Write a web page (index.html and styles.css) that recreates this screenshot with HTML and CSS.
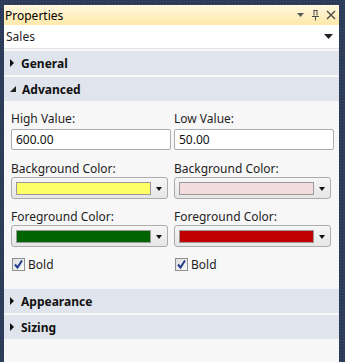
FILE: index.html
```html
<!DOCTYPE html>
<html lang="en">
<head>
    <meta charset="UTF-8">
    <title>Properties</title>
    <link rel="stylesheet" href="styles.css">
</head>
<body>
    <div class="panel">
        <div class="titlebar">
            <span class="title">Properties</span>
            <div class="title-tools">
                <svg width="9" height="6" viewBox="0 0 9 6"><path d="M1 1h7L4.5 5z" fill="#5a5a5a"/></svg>
                <svg width="9" height="12" viewBox="0 0 9 12"><path d="M2.5 1.5h4M3 1.5v5M6 1.5v5M1 7.5h7M4.5 7.5v4" stroke="#4a4a4a" stroke-width="1" fill="none"/></svg>
                <svg width="10" height="10" viewBox="0 0 10 10"><path d="M1 1l8 8M9 1l-8 8" stroke="#4a4a4a" stroke-width="1.4"/></svg>
            </div>
        </div>
        <div class="object-select">
            <span>Sales</span>
            <svg width="9" height="5" viewBox="0 0 9 5"><path d="M0 0h9L4.5 5z" fill="#222"/></svg>
        </div>

        <div class="section-header">
            <span class="arrow-right"></span>General
        </div>
        <div class="section-header">
            <span class="arrow-open"></span>Advanced
        </div>
        <div class="section-body">
            <div class="field">
                <label>High Value:</label>
                <input class="text-input" type="text" value="600.00">
            </div>
            <div class="field">
                <label>Low Value:</label>
                <input class="text-input" type="text" value="50.00">
            </div>

            <div class="field">
                <label>Background Color:</label>
                <div class="color-pick">
                    <span class="swatch" style="background:#ffff66"></span>
                    <span class="drop"></span>
                </div>
            </div>
            <div class="field">
                <label>Background Color:</label>
                <div class="color-pick">
                    <span class="swatch" style="background:#f5dcdc"></span>
                    <span class="drop"></span>
                </div>
            </div>

            <div class="field">
                <label>Foreground Color:</label>
                <div class="color-pick">
                    <span class="swatch" style="background:#006400"></span>
                    <span class="drop"></span>
                </div>
            </div>
            <div class="field">
                <label>Foreground Color:</label>
                <div class="color-pick">
                    <span class="swatch" style="background:#c00000"></span>
                    <span class="drop"></span>
                </div>
            </div>

            <div class="check-row">
                <span class="check-box">
                    <svg width="11" height="11" viewBox="0 0 11 11"><path d="M2 5.5l2.5 3L9 1.5" stroke="#213b8f" stroke-width="2" fill="none"/></svg>
                </span>
                <span>Bold</span>
            </div>
            <div class="check-row">
                <span class="check-box">
                    <svg width="11" height="11" viewBox="0 0 11 11"><path d="M2 5.5l2.5 3L9 1.5" stroke="#213b8f" stroke-width="2" fill="none"/></svg>
                </span>
                <span>Bold</span>
            </div>
        </div>
        <div class="section-header">
            <span class="arrow-right"></span>Appearance
        </div>
        <div class="section-header">
            <span class="arrow-right"></span>Sizing
        </div>
    </div>
</body>
</html>
```
FILE: styles.css
```css
html, body {
    height: 100%;
}

body {
    margin: 0;
    padding: 5px 6px 0 4px;
    box-sizing: border-box;
    background-color: #2a3a57;
    background-image: radial-gradient(circle, #3a4d6e 0.6px, transparent 0.8px);
    background-size: 3px 3px;
    font-family: 'Noto Sans', 'Open Sans', Arial, sans-serif;
    font-size: 12px;
    color: #1e1e1e;
}

.panel {
    background-color: #f7f7f7;
    height: 100%;
    display: flex;
    flex-direction: column;
}

.titlebar {
    height: 20px;
    display: flex;
    align-items: center;
    justify-content: space-between;
    padding: 0 3px 0 1px;
    background: linear-gradient(to bottom, #fff7e0, #ffe9a9);
    color: #000;
}

.title-tools {
    display: flex;
    align-items: center;
    gap: 6px;
}

.object-select {
    height: 23px;
    display: flex;
    align-items: center;
    justify-content: space-between;
    padding: 0 6px 0 2px;
    background-color: #fff;
    border-bottom: 1px solid #e3e3e3;
}

.section-header {
    height: 24px;
    margin-top: 2px;
    display: flex;
    align-items: center;
    padding-left: 6px;
    background-color: #e0e4ec;
    font-weight: bold;
    color: #111;
}

.arrow-right {
    width: 0;
    height: 0;
    border-top: 4px solid transparent;
    border-bottom: 4px solid transparent;
    border-left: 4px solid #111;
    margin-right: 7px;
}

.arrow-open {
    width: 0;
    height: 0;
    border-bottom: 6px solid #222;
    border-left: 6px solid transparent;
    margin-right: 6px;
}

.section-body {
    display: grid;
    grid-template-columns: 1fr 1fr;
    column-gap: 3px;
    row-gap: 10px;
    padding: 10px 5px 14px 7px;
}

.field label {
    display: block;
    height: 16px;
    line-height: 16px;
}

.text-input {
    display: block;
    box-sizing: border-box;
    width: 100%;
    height: 21px;
    margin-top: 2px;
    margin-bottom: 1px;
    padding: 0 4px;
    border: 1px solid #abadb3;
    border-radius: 2px;
    background: #fff;
    font: inherit;
    color: #111;
}

.color-pick {
    box-sizing: border-box;
    height: 22px;
    width: 98%;
    display: flex;
    align-items: center;
    padding: 0 0 0 4px;
    border: 1px solid #acacac;
    border-radius: 3px;
    background: linear-gradient(to bottom, #f6f6f6, #e6e6e6);
}

.swatch {
    flex: 1;
    height: 11px;
    border: 1px solid #9a9a9a;
}

.drop {
    width: 16px;
    height: 100%;
    position: relative;
}

.drop::after {
    content: "";
    position: absolute;
    left: 5px;
    top: 9px;
    border-top: 4px solid #111;
    border-left: 3px solid transparent;
    border-right: 3px solid transparent;
}

.check-row {
    display: flex;
    align-items: center;
    gap: 3px;
    padding-left: 1px;
    margin-top: -1px;
}

.check-box {
    box-sizing: border-box;
    width: 13px;
    height: 13px;
    border: 1px solid #8e8f8f;
    background: linear-gradient(to bottom right, #dcdcdc, #fbfbfb);
    display: flex;
    align-items: center;
    justify-content: center;
}
```
